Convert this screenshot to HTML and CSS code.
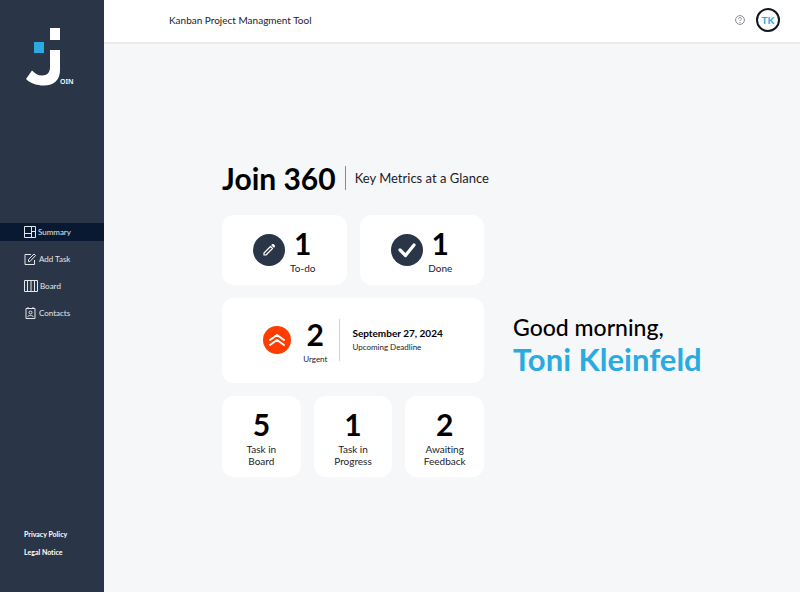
FILE: index.html
```html
<!DOCTYPE html>
<html lang="en">
<head>
<meta charset="utf-8">
<meta name="viewport" content="width=device-width, initial-scale=1">
<title>Join – Summary</title>
<link rel="stylesheet" href="styles.css">
</head>
<body>
<div class="app">
  <aside class="sidebar">
    <a class="logo" href="#" aria-label="Join">
      <svg width="50" height="60" viewBox="0 0 50 60">
        <path fill="#fff" d="M24 0h10v12H24zM24 22h10v20c0 10-6 15.500-16 15.500C10 57.500 4 55 0 51l6-8.500c3 3 6 5 10 5 5 0 8-3 8-8z"/>
        <path fill="#29abe2" d="M8 14h10v11H8z"/>
        <text class="logo-text" x="34" y="56">OIN</text>
      </svg>
    </a>
    <nav class="nav">
      <a class="nav-link active" href="#">
        <svg width="12" height="12" viewBox="0 0 12 12"><path d="M.5.5h11v11H.5zM7.500.5v11M.5 7.500h7M7.500 5.500h4"/></svg>Summary</a>
      <a class="nav-link" href="#">
        <svg width="13" height="12" viewBox="0 0 13 12"><path d="M7 1.500H1v10h9.500V7"/><path d="M4.500 8.500V6.500l5.500-5.500 1.500 1.500-5.500 6z"/></svg>Add Task</a>
      <a class="nav-link" href="#">
        <svg width="14" height="12" viewBox="0 0 14 12"><path d="M.5.5h13v11H.5zM3.500.5v11M7 .5v11M10.500.5v11"/></svg>Board</a>
      <a class="nav-link" href="#">
        <svg width="13" height="12" viewBox="0 0 13 12"><path d="M2 1.500h9v10H2zM4 0v2M9 0v2M3.500 10c1-2 5-2 6 0"/><circle cx="6.500" cy="5.500" r="1.500"/></svg>Contacts</a>
    </nav>
    <div class="legal">
      <a href="#">Privacy Policy</a>
      <a href="#">Legal Notice</a>
    </div>
  </aside>
  <div class="page">
    <header class="topbar">
      <span class="tagline">Kanban Project Managment Tool</span>
      <a class="help" href="#" aria-label="Help">
        <svg width="10" height="10" viewBox="0 0 10 10"><circle cx="5" cy="5" r="4.400"/><path d="M3.600 4c0-2 2.900-2 2.900-.2C6.500 5 5 4.800 5 6M5 7v1"/></svg>
      </a>
      <button class="avatar" type="button">TK</button>
    </header>
    <main class="summary">
      <div class="heading">
        <h1>Join 360</h1>
        <p>Key Metrics at a Glance</p>
      </div>
      <div class="content">
        <div class="cards">
          <div class="row">
            <a class="card" href="#">
              <svg width="32" height="32" viewBox="0 0 32 32"><circle cx="16" cy="16" r="16" fill="#2a3647"/><path fill="none" stroke="#fff" stroke-width="1.200" stroke-linejoin="round" d="M11 21v-2l6.500-6.500 2 2L13 21zM19 11l1-.5 1.500 1.500-.5 1z"/></svg>
              <span class="metric"><strong>1</strong><span>To-do</span></span>
            </a>
            <a class="card" href="#">
              <svg width="32" height="32" viewBox="0 0 32 32"><circle cx="16" cy="16" r="16" fill="#2a3647"/><path fill="none" stroke="#fff" stroke-width="3.200" stroke-linecap="round" stroke-linejoin="round" d="M9 16l5.500 5.500L23 11"/></svg>
              <span class="metric"><strong>1</strong><span>Done</span></span>
            </a>
          </div>
          <a class="card urgent" href="#">
            <svg width="28" height="28" viewBox="0 0 28 28"><circle cx="14" cy="14" r="14" fill="#ff3d00"/><path fill="none" stroke="#fff" stroke-width="2" stroke-linecap="round" stroke-linejoin="round" d="M7 14l7-5 7 5M7 19l7-5 7 5"/></svg>
            <span class="metric small"><strong>2</strong><span>Urgent</span></span>
            <span class="deadline"><b>September 27, 2024</b><span>Upcoming Deadline</span></span>
          </a>
          <div class="row">
            <a class="card tile" href="#"><span class="metric"><strong>5</strong><span>Task in<br>Board</span></span></a>
            <a class="card tile" href="#"><span class="metric"><strong>1</strong><span>Task in<br>Progress</span></span></a>
            <a class="card tile" href="#"><span class="metric"><strong>2</strong><span>Awaiting<br>Feedback</span></span></a>
          </div>
        </div>
        <div class="greeting">
          <p>Good morning,</p>
          <p class="name">Toni Kleinfeld</p>
        </div>
      </div>
    </main>
  </div>
</div>
</body>
</html>
```
FILE: styles.css
```css
* {
  box-sizing: border-box;
}

body {
  margin: 0;
  font-family: Lato, "Open Sans", sans-serif;
  font-variant-ligatures: none;
  color: #000;
  background: #f6f7f8;
}

a {
  color: inherit;
  text-decoration: none;
}

h1,
p {
  margin: 0;
}

svg {
  display: block;
  flex: none;
}

.app {
  display: flex;
  min-height: 100vh;
}

.sidebar {
  display: flex;
  flex-direction: column;
  flex: none;
  width: 13%;
  padding: 28px 0 34px;
  background: #2a3647;
  color: #fff;
}

.logo {
  margin-left: 26px;
}

.logo-text {
  font: 600 7px "Noto Sans", sans-serif;
  fill: #fff;
}

.nav {
  display: flex;
  flex-direction: column;
  gap: 9px;
  margin-top: 135px;
}

.nav-link {
  display: flex;
  align-items: center;
  gap: 2px;
  height: 18px;
  padding-left: 24px;
  font-size: 8px;
  color: #e3e6ea;
}

.nav-link svg {
  fill: none;
  stroke: #e3e6ea;
}

.nav-link.active {
  background: #091931;
}

.legal {
  display: flex;
  flex-direction: column;
  gap: 6px;
  margin-top: auto;
  padding-left: 24px;
  font-size: 7px;
  line-height: 12px;
  font-weight: 700;
}

.page {
  display: flex;
  flex-direction: column;
  flex: 1;
  min-width: 0;
}

.topbar {
  display: flex;
  align-items: center;
  height: 44px;
  padding: 0 20px 2px 65px;
  background: #fff;
  border-bottom: 2px solid #e9eaeb;
  font-size: 10px;
  color: #1c2128;
}

.tagline {
  flex: 1;
}

.help {
  margin-right: 11px;
}

.help svg {
  fill: none;
  stroke: #85898f;
}

.avatar {
  width: 24px;
  height: 24px;
  padding: 0;
  border: 2px solid #111820;
  border-radius: 50%;
  background: #fff;
  color: #29abe2;
  font: 700 10px Lato, sans-serif;
}

.summary {
  display: flex;
  flex-direction: column;
  justify-content: center;
  flex: 1;
  gap: 19px;
  padding: 0 60px 0 118px;
}

.heading {
  display: flex;
  align-items: center;
  gap: 9px;
}

.heading h1 {
  font-size: 30px;
  line-height: 36px;
}

.heading p {
  padding-left: 9px;
  border-left: 1px solid #29abe2;
  font-size: 13px;
  line-height: 24px;
  color: #1c2128;
}

.content {
  display: flex;
  align-items: center;
  gap: 29px;
}

.cards {
  display: flex;
  flex-direction: column;
  gap: 13px;
  flex: 0 0 262px;
}

.row {
  display: flex;
  gap: 13px;
}

.card {
  display: flex;
  align-items: center;
  justify-content: center;
  flex: 1;
  gap: 5px;
  min-height: 70px;
  border-radius: 12px;
  background: #fff;
}

.metric {
  display: flex;
  flex-direction: column;
  align-items: center;
  font-size: 10px;
  line-height: 12px;
  text-align: center;
  color: #1c2128;
}

.metric strong {
  color: #000;
  font-size: 30px;
  line-height: 37px;
}

.metric.small {
  font-size: 8px;
}

.urgent {
  gap: 12px;
  min-height: 85px;
}

.tile {
  min-height: 81px;
}

.deadline {
  display: flex;
  flex-direction: column;
  justify-content: center;
  min-height: 42px;
  padding-left: 12px;
  border-left: 1px solid #d1d1d1;
  font-size: 8px;
  line-height: 14px;
  color: #1c2128;
}

.deadline b {
  color: #000;
  font-size: 10px;
}

.greeting {
  font-size: 23px;
  line-height: 28px;
  font-weight: 500;
  white-space: nowrap;
}

.greeting .name {
  color: #29abe2;
  font-size: 31px;
  line-height: 37px;
  font-weight: 700;
}
```
